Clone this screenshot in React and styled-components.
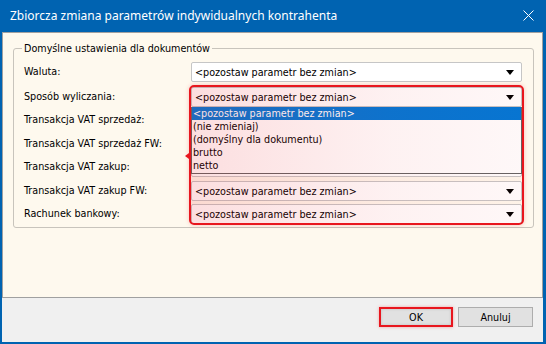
import React from "react";
import styled, { createGlobalStyle } from "styled-components";

const Global = createGlobalStyle`
  html, body { margin: 0; padding: 0; background: #ffffff; }
  body { width: 546px; height: 344px; overflow: hidden; }
  * { box-sizing: border-box; }
`;

const UI_FONT = `"DejaVu Sans Condensed", "DejaVu Sans", sans-serif`;

const Window = styled.div`
  width: 546px;
  height: 344px;
  display: flex;
  flex-direction: column;
  background: #0063b1;
  padding: 0 3px 2px 2px;
  font-family: ${UI_FONT};
  font-size: 10.7px;
  color: #000;
`;

const TitleBar = styled.div`
  height: 32px;
  flex: none;
  display: flex;
  align-items: center;
  justify-content: space-between;
  padding: 0 9px 1px 8px;
  color: #ffffff;
  font-family: "Noto Sans", "Open Sans", sans-serif;
  font-size: 12px;
`;

const CloseBtn = styled.div`
  width: 12px;
  height: 12px;
  display: flex;
  align-items: center;
  justify-content: center;
`;

const Body = styled.div`
  flex: 1;
  background: #fef9ee;
  border: 1px solid #a0a0a0;
  display: flex;
  flex-direction: column;
`;

const GroupBox = styled.fieldset`
  margin: 9px 8px 0 10px;
  padding: 7px 10px 3px 8px;
  border: 1px solid #c8c4bc;
  border-radius: 3px;
  min-width: 0;
`;

const Legend = styled.legend`
  padding: 0 2px;
  line-height: 13px;
`;

const Rows = styled.div`
  position: relative;
  margin-left: 2px;
  display: grid;
  grid-template-columns: 167px 331px;
  grid-template-rows: 25px 23px 24px 23px 24px 23px 20px;
  align-items: start;
`;

const Label = styled.div`
  height: 20px;
  line-height: 20px;
  white-space: nowrap;
`;

const Combo = styled.div`
  height: 20px;
  display: flex;
  align-items: center;
  justify-content: space-between;
  padding: 0 7px 0 3px;
  background: #ffffff;
  border: 1px solid #c6c6c6;
  border-radius: 2px;
  white-space: nowrap;
`;

const ComboText = styled.span`
  visibility: ${(p) => (p.$covered ? "hidden" : "visible")};
`;

const Arrow = styled.span`
  width: 0;
  height: 0;
  border-left: 4.5px solid transparent;
  border-right: 4.5px solid transparent;
  border-top: 5px solid #000;
`;

const ListBox = styled.div`
  position: absolute;
  left: 167px;
  top: 45px;
  width: 331px;
  height: 67px;
  background: #ffffff;
  border: 1px solid #646464;
  border-top: none;
  z-index: 2;
`;

const ListItem = styled.div`
  height: 13px;
  line-height: 13px;
  padding-left: 1px;
  white-space: nowrap;
  background: ${(p) => (p.$selected ? "#0078d7" : "transparent")};
  color: ${(p) => (p.$selected ? "#ffffff" : "#000000")};
`;

const Callout = styled.div`
  position: absolute;
  left: 165px;
  top: 23px;
  width: 335px;
  height: 140px;
  border: 2px solid #e8161e;
  border-radius: 5px;
  background: linear-gradient(90deg, rgba(232, 22, 30, 0.14), rgba(232, 22, 30, 0.06) 60%, rgba(232, 22, 30, 0.03));
  box-shadow: 0 0 4px rgba(232, 22, 30, 0.25);
  z-index: 3;
  pointer-events: none;

  &::before {
    content: "";
    position: absolute;
    left: -6px;
    top: 66px;
    border-top: 3.5px solid transparent;
    border-bottom: 3.5px solid transparent;
    border-right: 4px solid #e8161e;
  }
`;

const Footer = styled.div`
  height: 44px;
  flex: none;
  background: #f0f0f0;
  display: flex;
  justify-content: flex-end;
  align-items: flex-start;
  gap: 5px;
  padding: 9px 10px 0 0;
`;

const Button = styled.div`
  width: ${(p) => p.$w || 75}px;
  height: 20px;
  display: flex;
  align-items: center;
  justify-content: center;
  background: #e1e1e1;
  border: 1px solid #adadad;
  ${(p) =>
    p.$marked &&
    `
    border: 2px solid #e8161e;
    box-shadow: 0 0 3px rgba(232, 22, 30, 0.35), inset 0 0 3px rgba(0,0,0,0.15);
  `}
`;

const fields = [
  { label: "Waluta:" },
  { label: "Sposób wyliczania:" },
  { label: "Transakcja VAT sprzedaż:", covered: true },
  { label: "Transakcja VAT sprzedaż FW:", covered: true },
  { label: "Transakcja VAT zakup:", covered: true },
  { label: "Transakcja VAT zakup FW:" },
  { label: "Rachunek bankowy:" },
];

const KEEP = "<pozostaw parametr bez zmian>";

const options = [
  KEEP,
  "(nie zmieniaj)",
  "(domyślny dla dokumentu)",
  "brutto",
  "netto",
];

export default function App() {
  return (
    <>
      <Global />
      <Window>
        <TitleBar>
          <span>Zbiorcza zmiana parametrów indywidualnych kontrahenta</span>
          <CloseBtn>
            <svg width="11" height="11" viewBox="0 0 11 11">
              <path d="M0.5 0.5 L10.5 10.5 M10.5 0.5 L0.5 10.5" stroke="#fff" strokeWidth="1" />
            </svg>
          </CloseBtn>
        </TitleBar>
        <Body>
          <GroupBox>
            <Legend>Domyślne ustawienia dla dokumentów</Legend>
            <Rows>
              {fields.map((f) => (
                <React.Fragment key={f.label}>
                  <Label>{f.label}</Label>
                  <Combo>
                    <ComboText $covered={f.covered}>{f.covered ? "" : KEEP}</ComboText>
                    <Arrow />
                  </Combo>
                </React.Fragment>
              ))}
              <ListBox>
                {options.map((o, i) => (
                  <ListItem key={o} $selected={i === 0}>
                    {o}
                  </ListItem>
                ))}
              </ListBox>
              <Callout />
            </Rows>
          </GroupBox>
        </Body>
        <Footer>
          <Button $marked $w={74}>OK</Button>
          <Button>Anuluj</Button>
        </Footer>
      </Window>
    </>
  );
}
